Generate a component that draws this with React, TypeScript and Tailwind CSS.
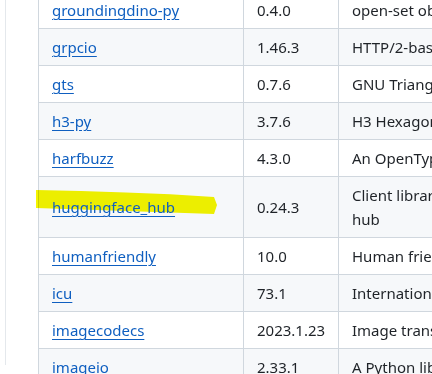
const rows: { name: string; version: string; desc: React.ReactNode }[] = [
  { name: 'groundingdino-py', version: '0.4.0', desc: 'open-set object detection' },
  { name: 'grpcio', version: '1.46.3', desc: 'HTTP/2-based RPC framework' },
  { name: 'gts', version: '0.7.6', desc: 'GNU Triangulated Surface Library' },
  { name: 'h3-py', version: '3.7.6', desc: 'H3 Hexagonal hierarchical geospatial indexing system' },
  { name: 'harfbuzz', version: '4.3.0', desc: 'An OpenType text shaping engine' },
  {
    name: 'huggingface_hub',
    version: '0.24.3',
    desc: (
      <>
        Client library to download and publish models on the huggingface.co
        <br />
        hub
      </>
    ),
  },
  { name: 'humanfriendly', version: '10.0', desc: 'Human friendly output for text interfaces' },
  { name: 'icu', version: '73.1', desc: 'International Components for Unicode' },
  { name: 'imagecodecs', version: '2023.1.23', desc: 'Image transformation, compression, and decompression codecs' },
  { name: 'imageio', version: '2.33.1', desc: 'A Python library for reading and writing image data' },
];

export default function App() {
  return (
    <main
      className="h-[374px] w-[432px] overflow-hidden bg-white text-[15px] leading-6 text-[#1f2328]"
      style={{ fontFamily: '"Segoe UI", "Noto Sans", "Liberation Sans", sans-serif' }}
    >
      <div className="ml-[5px] h-full border-l border-[#e4e8ec] pl-[32px]">
        <div className="relative -mt-[9px]">
          <table className="w-[760px] table-fixed border-collapse whitespace-nowrap">
            <colgroup>
              <col className="w-[205px]" />
              <col className="w-[95px]" />
              <col />
            </colgroup>
            <tbody>
              {rows.map((r, i) => (
                <tr key={r.name} className={i % 2 === 1 ? 'bg-[#f6f8fa]' : 'bg-white'}>
                  <td className="border border-[#d0d7de] px-[13px] py-[6px]">
                    <a href="#" className="relative z-10 text-[#0f5fc0] underline underline-offset-[3px]">
                      {r.name}
                    </a>
                  </td>
                  <td className="border border-[#d0d7de] px-[13px] py-[6px]">{r.version}</td>
                  <td className="overflow-hidden border border-[#d0d7de] px-[13px] py-[6px]">{r.desc}</td>
                </tr>
              ))}
            </tbody>
          </table>

          {/* yellow marker stroke */}
          <svg
            className="pointer-events-none absolute left-[-2px] top-[198px] z-0 mix-blend-multiply"
            width="184"
            height="30"
            viewBox="0 0 184 30"
          >
            <path d="M0 1 C 60 2, 120 4, 178 8 L 181 16 L 178 25 C 120 23, 60 21, 0 19 Z" fill="#f5f500" />
          </svg>
        </div>
      </div>
    </main>
  );
}
